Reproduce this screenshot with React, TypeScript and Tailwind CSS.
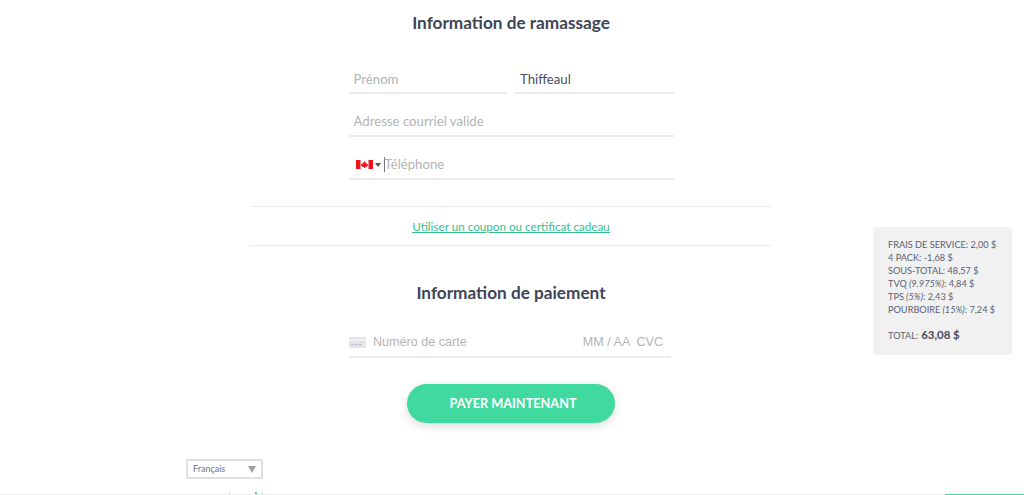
const font = "font-['Lato','Noto_Sans',sans-serif]";

const summary = [
  { label: "FRAIS DE SERVICE", note: "", value: "2,00 $" },
  { label: "4 PACK", note: "", value: "-1,68 $" },
  { label: "SOUS-TOTAL", note: "", value: "48,57 $" },
  { label: "TVQ", note: "(9.975%)", value: "4,84 $" },
  { label: "TPS", note: "(5%)", value: "2,43 $" },
  { label: "POURBOIRE", note: "(15%)", value: "7,24 $" },
];

function Field({ text, filled, raised }: { text: string; filled?: boolean; raised?: boolean }) {
  return (
    <div
      className={`flex h-[31px] items-end border-b-2 border-[#ebebeb] pl-[5px] text-[13.2px] leading-[20px] ${
        raised ? "pb-[4px]" : "pb-[3px]"
      } ${filled ? "text-[#4a4f5f]" : "text-[#b4b4b4]"}`}
    >
      {text}
    </div>
  );
}

function CanadaFlag() {
  return (
    <svg width="17" height="9" viewBox="0 0 17 9" className="shrink-0">
      <rect width="17" height="9" fill="#fff" />
      <rect width="4.5" height="9" fill="#f0131e" />
      <rect x="12.5" width="4.5" height="9" fill="#f0131e" />
      <path
        d="M8.5 1 9.2 2.4 10 2 9.7 3.8 10.6 3.2 11.2 4.2 12 4.1 11.6 5.4 12 5.7 10 7 9 6.9 9 8 8 8 8 6.9 7 7 5 5.7 5.4 5.4 5 4.1 5.8 4.2 6.4 3.2 7.3 3.8 7 2 7.8 2.4Z"
        fill="#f0131e"
      />
    </svg>
  );
}

function CardIcon() {
  return (
    <svg width="17" height="11" viewBox="0 0 17 11" className="mb-[4px] shrink-0">
      <rect width="17" height="11" rx="1" fill="#e3e5ec" />
      <rect y="2" width="17" height="2" fill="#f0f1f5" />
      <rect x="2" y="7" width="3" height="1.5" fill="#c3c6d1" />
      <rect x="6" y="7" width="3" height="1.5" fill="#c3c6d1" />
      <rect x="10" y="7" width="3" height="1.5" fill="#c3c6d1" />
    </svg>
  );
}

export default function App() {
  return (
    <div className={`relative h-[495px] w-[1024px] overflow-hidden bg-white ${font}`}>
      <main className="flex w-[1022px] flex-col items-center pt-[12px]">
        <h2 className="text-[17.2px] leading-[22px] font-bold text-[#3f4456]">
          Information de ramassage
        </h2>

        <div className="mt-[29px] flex w-[325px] flex-col gap-[12px]">
          <div className="grid grid-cols-2 gap-[8px]">
            <Field text="Prénom" />
            <Field text="Thiffeaul" filled />
          </div>
          <Field text="Adresse courriel valide" raised />
          <div className="flex h-[31px] items-end border-b-2 border-[#ebebeb] pb-[4px] pl-[7px] text-[13.2px] leading-[20px] text-[#b4b4b4]">
            <div className="mb-[5px] flex items-center">
              <CanadaFlag />
              <span className="mr-[3px] ml-[2px] h-0 w-0 border-x-[3px] border-t-[4px] border-x-transparent border-t-[#555]" />
            </div>
            <span className="mb-[2px] h-[15px] w-px bg-[#777]" />
            Téléphone
          </div>
        </div>

        <div className="mt-[26px] flex h-[40px] w-[520px] items-center justify-center border-y border-[#ebebeb]">
          <a className="text-[11.7px] leading-[18px] text-[#35bf8f] underline">
            Utiliser un coupon ou certificat cadeau
          </a>
        </div>

        <h2 className="mt-[36px] text-[17.2px] leading-[22px] font-bold text-[#3f4456]">
          Information de paiement
        </h2>

        <div className="mt-[23px] mr-[2px] flex h-[31px] w-[322px] items-end border-b-2 border-[#ebebeb] pb-[4px] font-['Liberation_Sans',sans-serif] text-[12.6px] leading-[20px] text-[#b4b4b4]">
          <CardIcon />
          <span className="ml-[7px]">Numéro de carte</span>
          <span className="ml-auto">MM / AA</span>
          <span className="mr-[8px] ml-[6px]">CVC</span>
        </div>

        <button className="mt-[26px] h-[39px] w-[208px] rounded-full bg-[#40d99f] pl-[4px] text-[12.7px] font-bold text-white shadow-[0_3px_10px_rgba(0,0,0,0.14)]">
          PAYER MAINTENANT
        </button>

        <div className="mt-[36px] w-[650px]">
          <div className="flex h-[20px] w-[77px] items-center justify-between border-2 border-[#e0e0e0] pr-[5px] pl-[5px] text-[9px] text-[#74777f]">
            Français
            <span className="h-0 w-0 border-x-[4px] border-t-[7px] border-x-transparent border-t-[#a0a0a0]" />
          </div>
        </div>
      </main>

      {/* tops of the footer logo, cut off by the window */}
      <span className="absolute top-[492px] left-[229px] h-[2px] w-px bg-[#cfcfcf]" />
      <span className="absolute top-[492px] left-[255px] h-[2px] w-[2px] bg-[#40d99f]" />
      <span className="absolute top-[493px] left-[261px] h-px w-[2px] bg-[#a8eacf]" />

      {/* bottom edge of the next section, cut off by the window */}
      <div className="absolute inset-x-0 bottom-0 flex h-[1px] justify-end bg-[#eeeeee]">
        <div className="h-full w-[79px] bg-[#40d99f]" />
      </div>

      <aside className="absolute top-[227px] left-[873px] h-[128px] w-[139px] rounded-[3px] bg-[#f1f1f1] pt-[11px] pl-[15px] text-[9.2px] leading-[13px] text-[#5b6070]">
        {summary.map((row) => (
          <p key={row.label} className="whitespace-nowrap">
            {row.label}
            {row.note && <i> {row.note}</i>}: {row.value}
          </p>
        ))}
        <p className="mt-[11px] flex items-baseline gap-[3px] leading-[16px]">
          TOTAL:
          <b className="text-[11.4px] text-[#454a5c]">63,08 $</b>
        </p>
      </aside>
    </div>
  );
}
